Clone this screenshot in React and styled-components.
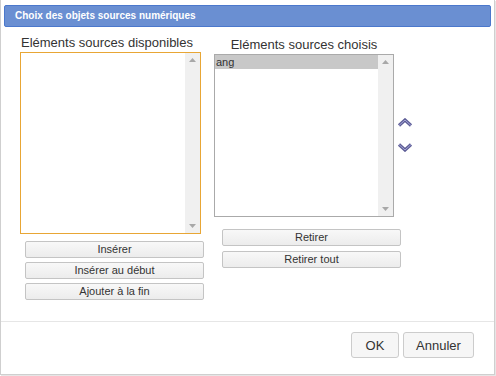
import React from "react";
import styled, { createGlobalStyle } from "styled-components";

const Global = createGlobalStyle`
  html, body { margin: 0; padding: 0; background: #fff; }
  body { font-family: "Liberation Sans", Arial, sans-serif; width: 496px; height: 376px; overflow: hidden; }
`;

const Dialog = styled.div`
  box-sizing: border-box;
  width: 495px;
  height: 375px;
  border: 1px solid #cfcfcf;
  border-top: none;
  box-shadow: 1px 1px 0 #e6e6e6;
  padding: 5px 3px 0 3px;
  display: flex;
  flex-direction: column;
  background: #fff;
`;

const TitleBar = styled.div`
  box-sizing: border-box;
  height: 22px;
  background: #6a8fd2;
  border: 1px solid #4b78cc;
  border-radius: 2px;
  color: #fff;
  font-weight: bold;
  font-size: 10px;
  line-height: 20px;
  padding-left: 10px;
`;

const Content = styled.div`
  flex: 1;
  display: flex;
  padding: 8px 0 0 16px;
  gap: 10px;
`;

const Column = styled.div`
  display: flex;
  flex-direction: column;
  padding-top: ${(p) => p.$top || 0}px;
`;

const Label = styled.div`
  box-sizing: border-box;
  font-size: 13px;
  line-height: 15px;
  color: #333;
  margin-bottom: 2px;
  padding-left: ${(p) => (p.$center ? 0 : 1)}px;
  width: ${(p) => p.$width}px;
  text-align: ${(p) => (p.$center ? "center" : "left")};
  white-space: nowrap;
`;

const ListBox = styled.div`
  box-sizing: border-box;
  width: ${(p) => p.$width}px;
  height: ${(p) => p.$height}px;
  border: 1px solid ${(p) => (p.$focus ? "#e8a635" : "#aaaaaa")};
  display: flex;
  background: #fff;
`;

const Items = styled.div`
  flex: 1;
  display: flex;
  flex-direction: column;
`;

const Item = styled.div`
  height: 14px;
  line-height: 14px;
  font-size: 11px;
  color: #333;
  padding-left: 1px;
  background: ${(p) => (p.$selected ? "#c8c8c8" : "transparent")};
`;

const ScrollTrack = styled.div`
  width: 15px;
  background: #f0f0f0;
  display: flex;
  flex-direction: column;
  justify-content: space-between;
  align-items: center;
  padding: 5px 0;
`;

const Arrow = ({ down }) => (
  <svg width="7" height="4" viewBox="0 0 7 4">
    <path d={down ? "M0 0 H7 L3.5 4 Z" : "M0 4 H7 L3.5 0 Z"} fill="#a8a8a8" />
  </svg>
);

const ButtonStack = styled.div`
  display: flex;
  flex-direction: column;
  gap: ${(p) => p.$gap}px;
  margin-top: ${(p) => p.$mt}px;
  margin-left: ${(p) => p.$ml}px;
`;

const SmallButton = styled.button`
  box-sizing: border-box;
  width: 179px;
  height: 17px;
  padding: 0;
  font-family: "Liberation Sans", Arial, sans-serif;
  font-size: 11px;
  font-weight: normal;
  color: #333;
  background: linear-gradient(#f8f8f8, #ececec);
  border: 1px solid #c4c4c4;
  border-radius: 2px;
  line-height: 15px;
`;

const BoxRow = styled.div`
  display: flex;
  align-items: center;
  gap: 3px;
`;

const MoveArrows = styled.div`
  display: flex;
  flex-direction: column;
  gap: 14px;
  padding-bottom: 2px;
`;

const Chevron = ({ down }) => (
  <svg width="16" height="10" viewBox="0 0 16 10">
    <path
      d={down ? "M2 2.5 L8 8 L14 2.5" : "M2 7.5 L8 2 L14 7.5"}
      stroke="#5d5d96"
      strokeWidth="3.2"
      fill="none"
      strokeLinejoin="miter"
    />
    <path
      d={down ? "M2 2.5 L8 8 L14 2.5" : "M2 7.5 L8 2 L14 7.5"}
      stroke="#a5a5d6"
      strokeWidth="1"
      fill="none"
    />
  </svg>
);

const Footer = styled.div`
  border-top: 1px solid #e6e6e6;
  display: flex;
  justify-content: flex-end;
  gap: 4px;
  padding: 10px 20px 16px 0;
  margin: 0 -3px;
`;

const DialogButton = styled.button`
  box-sizing: border-box;
  height: 26px;
  width: ${(p) => p.$width}px;
  font-family: "Liberation Sans", Arial, sans-serif;
  font-size: 13px;
  color: #333;
  background: #f6f6f6;
  border: 1px solid #cccccc;
  border-radius: 3px;
  padding: 0;
`;

export default function App() {
  return (
    <>
      <Global />
      <Dialog>
        <TitleBar>Choix des objets sources numériques</TitleBar>
        <Content>
          <Column>
            <Label $width={184}>Eléments sources disponibles</Label>
            <ListBox $focus $width={181} $height={182}>
              <Items />
              <ScrollTrack>
                <Arrow />
                <Arrow down />
              </ScrollTrack>
            </ListBox>
            <ButtonStack $gap={4} $mt={7} $ml={5}>
              <SmallButton>Insérer</SmallButton>
              <SmallButton>Insérer au début</SmallButton>
              <SmallButton>Ajouter à la fin</SmallButton>
            </ButtonStack>
          </Column>
          <Column $top={2}>
            <Label $center $width={180}>Eléments sources choisis</Label>
            <BoxRow>
              <ListBox $width={180} $height={163}>
                <Items>
                  <Item $selected>ang</Item>
                </Items>
                <ScrollTrack>
                  <Arrow />
                  <Arrow down />
                </ScrollTrack>
              </ListBox>
              <MoveArrows>
                <Chevron />
                <Chevron down />
              </MoveArrows>
            </BoxRow>
            <ButtonStack $gap={5} $mt={12} $ml={8}>
              <SmallButton>Retirer</SmallButton>
              <SmallButton>Retirer tout</SmallButton>
            </ButtonStack>
          </Column>
        </Content>
        <Footer>
          <DialogButton $width={48}>OK</DialogButton>
          <DialogButton $width={71}>Annuler</DialogButton>
        </Footer>
      </Dialog>
    </>
  );
}
